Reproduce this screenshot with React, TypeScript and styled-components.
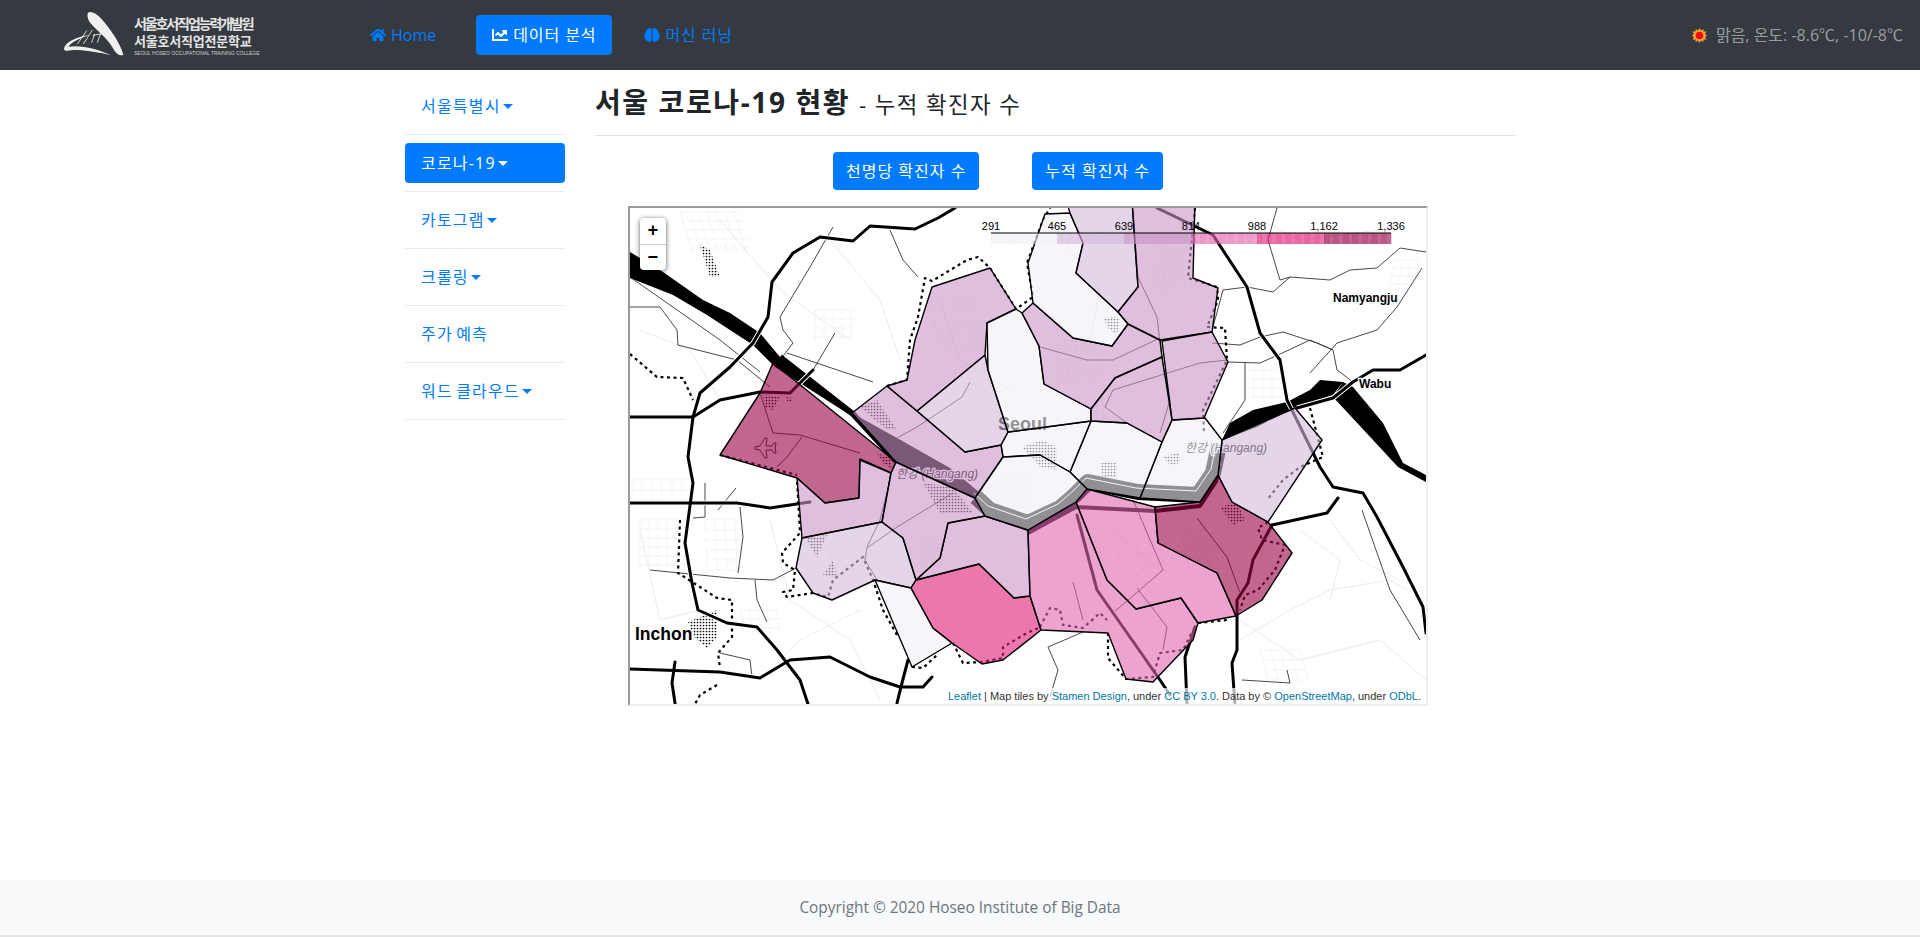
import React from 'react'
import styled, { createGlobalStyle } from 'styled-components'
import { FaBrain, FaChartLine, FaHome } from 'react-icons/fa'

const GlobalStyle = createGlobalStyle`
    html, body { margin: 0; padding: 0; background: #fff; }
    body {
        font-family: "Open Sans", "Noto Sans CJK KR", sans-serif;
        font-size: 16px;
        line-height: 24px;
        color: #212529;
    }
    * { box-sizing: border-box; }
`

const Page = styled.div`
    display: flex;
    flex-direction: column;
    height: 937px;
    overflow: hidden;
`

const Header = styled.header`
    display: flex;
    align-items: center;
    flex: 0 0 70px;
    padding: 0 17px 0 64px;
    background: #343a40;
`

const Logo = styled.div`
    display: flex;
    align-items: center;
    gap: 4px;
    width: 290px;
    color: #e4e4e4;
`

const LogoText = styled.div`
    display: flex;
    flex-direction: column;
    font-family: "Noto Sans CJK KR", sans-serif;
    font-weight: 700;
    white-space: nowrap;
`

const LogoLine = styled.span<{ $size: number; $spacing: number; $height: number }>`
    font-size: ${(p) => p.$size}px;
    letter-spacing: ${(p) => p.$spacing}px;
    line-height: ${(p) => p.$height}px;
`

const LogoSmall = styled.span`
    font-family: "Liberation Sans", sans-serif;
    font-size: 5px;
    line-height: 8px;
    letter-spacing: -0.02px;
    font-weight: 400;
    color: #cfcfcf;
`

const NavList = styled.nav`
    display: flex;
    align-items: center;
    gap: 24px;
`

const NavLink = styled.a<{ $active?: boolean; $korean?: boolean }>`
    display: flex;
    align-items: center;
    gap: 5px;
    height: 40px;
    padding: 0 16px;
    margin-right: ${(p) => (p.$active ? '-8px' : '0')};
    border-radius: 4px;
    white-space: nowrap;
    letter-spacing: ${(p) => (p.$korean ? '0.9px' : '0')};
    color: ${(p) => (p.$active ? '#fff' : '#007bff')};
    background: ${(p) => (p.$active ? '#007bff' : 'transparent')};
`

const Weather = styled.div`
    display: flex;
    align-items: center;
    gap: 9px;
    margin-left: auto;
    color: rgba(255, 255, 255, 0.5);
    white-space: nowrap;
`

const Body = styled.div`
    display: flex;
    flex: 1;
    width: 1140px;
    margin: 0 auto;
`

const Sidebar = styled.ul`
    flex: 0 0 190px;
    list-style: none;
    margin: 8px 0 0;
    padding: 0 15px;
`

const SideItem = styled.li`
    padding: 8px 0;
    border-bottom: 1px solid #e9ecef;
`

const SideLink = styled.a<{ $active?: boolean }>`
    display: block;
    height: 40px;
    padding: 8px 16px;
    border-radius: 4px;
    letter-spacing: 1.2px;
    word-spacing: -2px;
    color: ${(p) => (p.$active ? '#fff' : '#007bff')};
    background: ${(p) => (p.$active ? '#007bff' : 'transparent')};
`

const Caret = styled.span`
    display: inline-block;
    margin-left: 2px;
    vertical-align: 3px;
    border-top: 5px solid;
    border-right: 5px solid transparent;
    border-left: 5px solid transparent;
`

const Main = styled.main`
    flex: 0 0 950px;
    padding: 0 15px;
`

const Title = styled.h3`
    margin: 0;
    height: 66px;
    padding-top: 16px;
    border-bottom: 1px solid #dee2e6;
    font-size: 28px;
    line-height: 33px;
    font-weight: 700;
    letter-spacing: 1.6px;
`

const TitleNote = styled.small`
    font-size: 22.4px;
    font-weight: 400;
    letter-spacing: 1.4px;
`

const ButtonRow = styled.div`
    display: flex;
    gap: 53px;
    margin: 16px 0 16px 238px;
`

const Button = styled.a`
    display: block;
    height: 38px;
    padding: 7px 13px;
    border-radius: 4px;
    color: #fff;
    background: #007bff;
    letter-spacing: 1px;
    white-space: nowrap;
`

const MapFrame = styled.div`
    position: relative;
    width: 800px;
    height: 500px;
    margin-left: 33px;
    border: 2px solid;
    border-color: #9a9a9a #eee #eee #9a9a9a;
    overflow: hidden;
`

const MapSvg = styled.svg`
    display: block;
    width: 796px;
    height: 496px;
`

const ZoomBox = styled.div`
    position: absolute;
    top: 10px;
    left: 10px;
    width: 26px;
    border-radius: 4px;
    background: #fff;
    box-shadow: 0 1px 5px rgba(0, 0, 0, 0.65);
`

const ZoomButton = styled.a`
    display: block;
    height: 26px;
    font: bold 18px/26px "Lucida Console", "Liberation Mono", monospace;
    text-align: center;
    color: #000;
    & + & { border-top: 1px solid #ccc; }
`

const Attribution = styled.div`
    position: absolute;
    right: 0;
    bottom: 0;
    padding: 0 5px;
    background: rgba(255, 255, 255, 0.7);
    font: 11px/16px "Liberation Sans", sans-serif;
    color: #333;
    white-space: nowrap;
`

const AttrLink = styled.a`
    color: #0078a8;
`

const Footer = styled.footer`
    flex: 0 0 57px;
    padding-top: 16px;
    border-bottom: 2px solid #e4e4e6;
    background: #f8f9fa;
    color: #6c757d;
    text-align: center;
    font-size: 15.4px;
`

const FILLS = ['#f1eef6', '#d4b9da', '#c994c7', '#df65b0', '#dd1c77', '#980043']

const DISTRICTS: [number, string][] = [
    [5, '773,363 896,462 891,473 860,459 859,498 825,503 797,478 720,455 760,393'],
    [2, '797,478 825,503 859,498 860,460 891,473 882,522 802,538'],
    [1, '802,538 882,522 903,538 916,580 911,588 875,580 832,600 813,593 796,568'],
    [0, '875,580 911,588 933,628 952,643 912,667'],
    [4, '911,588 916,580 979,564 1014,598 1030,596 1041,630 1003,660 982,664 952,643 933,628'],
    [2, '916,580 940,558 948,523 985,516 1028,530 1030,596 1014,598 979,564'],
    [2, '896,462 975,498 985,516 948,523 940,558 916,580 903,538 882,522 891,473'],
    [3, '1028,530 1076,502 1107,580 1136,609 1181,598 1198,623 1193,640 1153,682 1126,679 1108,633 1041,630 1030,596'],
    [3, '1076,502 1087,489 1155,507 1158,543 1217,573 1236,616 1198,623 1181,598 1136,609 1107,580'],
    [5, '1155,507 1200,502 1218,475 1232,502 1268,522 1292,553 1262,600 1236,616 1217,573 1158,543'],
    [1, '1222,440 1295,408 1322,440 1268,522 1232,502 1218,475'],
    [0, '1172,420 1205,418 1222,440 1218,475 1200,502 1140,498 1162,442'],
    [0, '1091,421 1127,423 1162,442 1140,498 1087,489 1070,472'],
    [0, '1008,432 1091,421 1070,472 1040,455 1003,457 1001,445'],
    [2, '852,413 887,386 917,411 965,452 1001,445 1003,457 975,498 896,462'],
    [0, '1003,457 1040,455 1070,472 1087,489 1076,502 1028,530 985,516 975,498'],
    [1, '917,411 985,355 988,370 1008,432 1001,445 965,452'],
    [2, '887,386 907,380 915,340 932,287 990,268 1016,309 987,323 985,355 917,411'],
    [0, '987,323 1016,309 1022,313 1039,346 1044,384 1091,409 1091,421 1008,432 988,370'],
    [2, '1022,313 1033,303 1073,338 1112,346 1128,324 1160,340 1162,357 1115,378 1091,409 1044,384 1039,346'],
    [0, '1033,303 1028,263 1045,214 1070,213 1083,243 1076,273 1118,312 1128,324 1112,346 1073,338'],
    [1, '1070,213 1066,200 1132,200 1138,287 1118,312 1076,273 1083,243'],
    [2, '1132,200 1195,200 1193,278 1218,288 1212,332 1160,340 1128,324 1118,312 1138,287'],
    [2, '1162,341 1212,332 1228,362 1204,418 1172,420'],
    [2, '1162,357 1172,420 1162,442 1127,423 1091,421 1091,409 1115,378'],
]

const RIVERS = [
    '630,252 663,272 703,300 730,313 760,333 780,357 853,411 853,417 775,367 753,345 707,315 673,295 630,278',
    '852,413 897,438 950,468 985,497 1000,515 980,505 975,498 896,462',
    '1222,440 1230,423 1253,410 1287,402 1310,390 1320,380 1343,382 1333,395 1293,408 1257,427',
    '1343,382 1353,387 1383,423 1403,463 1426,475 1426,482 1398,467 1373,440 1333,397',
]

const HAN_RIVER = '976,497 990,510 1028,523 1060,508 1075,495 1088,482 1138,492 1198,495 1213,473 1219,445'
const HAN_SOUTH = '1028,533 1076,507 1155,511 1200,506 1217,480'
const HAN_WEST = '780,357 853,414 896,461'

const MOTORWAYS = [
    '955,208 938,218 915,229 870,226 853,241 820,237 793,253 772,282 768,317 753,343 730,367 700,393 693,417 688,457 693,483 685,543 692,583 698,610 727,623 757,627 777,650 800,680 808,704',
    '630,417 693,417 720,400 760,392 790,393 813,370',
    '630,503 737,503 770,508 810,502',
    '630,669 720,672 760,678 790,660 830,657 870,677 900,687 923,687 932,677',
    '675,662 672,683 675,703',
    '908,660 902,683 897,703',
    '1157,208 1213,235 1247,287 1260,333 1280,360 1287,400 1320,467 1333,487 1363,493 1377,517 1403,567 1423,607 1426,633',
    '1272,525 1327,513 1338,498',
    '1272,525 1253,560 1248,583 1237,600 1237,650 1232,663 1235,705',
    '1077,515 1097,590 1160,680 1170,695',
    '1195,627 1185,657 1187,705',
    '1297,408 1333,398 1353,382 1373,370 1400,370 1426,355',
]

const ROADS = [
    '1247,287 1273,292 1290,277 1330,280 1350,270 1377,268 1400,248 1426,252',
    '1310,373 1337,343 1377,330 1397,307 1422,268',
    '1213,327 1223,290 1247,287',
    '1228,362 1260,363 1278,355 1310,340 1333,350 1337,370 1353,382',
    '1260,337 1283,332 1317,343 1333,350',
    '1212,343 1240,345 1260,337',
    '1245,363 1245,400 1223,433',
    '1277,208 1268,240 1280,280 1290,277',
    '630,307 660,307 677,330 678,345 737,360 770,387',
    '630,277 720,340 760,372',
    '833,227 810,267 780,317 783,330 793,343 780,360',
    '835,333 813,370',
    '787,353 873,382',
    '890,230 903,260 918,277',
    '650,570 680,573 730,578 773,580 796,568',
    '738,573 743,537 740,507',
    '755,580 757,600 767,622',
    '720,653 750,660 752,677',
    '705,483 705,517 693,518',
    '1048,647 1058,670 1050,697',
    '1048,647 1083,632',
    '1242,680 1290,683 1287,670',
    '970,382 962,397 917,427 897,438',
    '1040,347 1087,360 1113,360 1160,338',
    '1227,360 1200,363 1113,390 1105,407 1127,423',
    '1133,210 1138,277 1157,317 1163,367 1170,400 1160,433',
    '1197,518 1227,557 1240,593',
    '1133,500 1163,570 1113,613',
    '1137,588 1167,627 1163,650',
    '1073,582 1083,620',
    '760,393 773,433 800,435 860,453',
    '802,437 787,457 777,467',
    '890,480 880,520 867,547 865,560 877,580',
    '953,493 897,527 867,548',
    '736,488 718,510',
    '1362,510 1390,590 1420,640',
]

const FAINT = [
    '1240,640 1290,610 1330,590 1390,580 1426,600',
    '1300,530 1340,560 1330,600',
    '1330,520 1360,560 1400,580',
    '640,330 690,350 720,400',
    '830,240 880,300 900,360',
    '720,220 780,290 850,340',
    '640,530 660,620 700,610',
    '770,520 790,600 850,640 880,700',
    '1050,220 1100,290 1090,340',
    '940,300 960,360 1010,390',
    '1260,220 1300,240 1380,230',
    '1240,620 1300,660 1380,640 1426,680',
    '760,680 800,640 860,610',
    '1100,520 1150,560 1120,600',
]

const BOUNDARIES = [
    '887,386 907,380 910,340 918,317 925,278 932,281 967,260 978,257 990,268 1016,309 1033,297 1027,263 1043,220 1050,208',
    '1195,208 1188,278 1217,287 1218,300 1207,327 1225,328 1227,360 1203,410 1204,433',
    '1310,408 1323,457 1300,467 1283,480 1267,500',
    '1268,522 1258,528 1262,540 1285,545 1275,570 1258,590 1245,595 1240,610',
    '1040,627 1050,608 1060,610 1063,625 1083,628 1100,613 1107,620',
    '1198,623 1227,620',
    '1108,633 1108,658 1126,679 1153,677 1160,653 1183,650 1193,630',
    '953,643 963,663 982,662 1003,658 1003,647 1027,633 1041,627',
    '912,667 923,668 937,655',
    '897,635 883,610 873,580 863,557 833,580 828,597 813,593 787,597 783,592 793,590 795,570 783,563 782,553 800,533 797,480',
    '720,455 797,475',
    '630,354 657,377 683,378 693,400',
    '680,520 678,573 700,587 717,598 732,600 732,637 718,653 720,668',
    '717,685 700,695 695,704',
]

const STIPPLES = [
    '700,245 710,250 720,277 710,277',
    '763,393 780,397 773,410 765,408',
    '785,397 793,398 789,404',
    '860,407 877,400 897,430 887,430',
    '877,453 890,457 893,470 883,463',
    '1022,447 1042,440 1057,447 1057,470 1040,467',
    '1103,317 1120,317 1117,335 1108,328',
    '1100,463 1117,463 1117,477 1103,477',
    '1163,457 1180,452 1180,463 1170,465',
    '1220,507 1237,503 1245,520 1233,525',
    '923,483 953,487 973,513 940,513',
    '805,538 827,535 817,557',
    '823,575 833,560 837,578',
    '688,622 717,610 717,637 707,648 695,638',
]

// faint street blocks: x, y, width, height, spacing, shear
const STREETS: [number, number, number, number, number, number][] = [
    [680, 212, 60, 40, 9, 12],
    [632, 480, 60, 20, 10, 0],
    [640, 520, 45, 50, 9, 0],
    [705, 520, 35, 50, 10, 2],
    [815, 310, 40, 30, 9, 0],
    [1150, 250, 30, 40, 10, 6],
    [1245, 370, 35, 30, 9, 0],
    [1395, 260, 25, 30, 8, -6],
    [1055, 340, 40, 40, 10, 4],
    [930, 300, 50, 50, 11, 10],
    [920, 540, 25, 30, 9, 3],
    [1110, 520, 45, 50, 11, 12],
    [1000, 480, 30, 30, 9, 0],
    [1260, 650, 40, 30, 10, 8],
    [740, 610, 40, 25, 9, 4],
    [1180, 530, 30, 40, 10, 10],
    [830, 545, 40, 30, 10, 3],
    [1085, 400, 20, 20, 6, 0],
]

const streetPath = ([x, y, w, h, s, d]: (typeof STREETS)[number]) => {
    let out = ''
    for (let i = 0; i <= w; i += s) out += `M${x + i} ${y}L${x + i + d} ${y + h}`
    for (let j = 0; j <= h; j += s) {
        const sx = x + (d * j) / h
        out += `M${sx} ${y + j}L${sx + w} ${y + j}`
    }
    return out
}

const TICKS: [number, string][] = [
    [991, '291'],
    [1057, '465'],
    [1124, '639'],
    [1191, '814'],
    [1257, '988'],
    [1324, '1,162'],
    [1391, '1,336'],
]

const Legend = () => (
    <g>
        {TICKS.slice(0, -1).map(([x], i) =>
            Array.from({ length: 14 }, (_, k) => (
                <rect
                    key={`${i}-${k}`}
                    x={x + (k * (TICKS[i + 1][0] - x)) / 14}
                    y={233}
                    width={(TICKS[i + 1][0] - x) / 14 + 0.3}
                    height={11}
                    fill={FILLS[i]}
                    opacity={k % 2 ? 0.6 : 0.66}
                />
            )),
        )}
        <line x1={991} x2={1391} y1={233} y2={233} stroke="#000" />
        {TICKS.map(([x, label]) => (
            <text key={label} x={x} y={230} textAnchor="middle" fontSize={11} fontFamily="Liberation Sans, sans-serif" fill="#000">
                {label}
            </text>
        ))}
    </g>
)

const MapLabel = ({ x, y, size, children }: { x: number; y: number; size: number; children: string }) => (
    <text
        x={x}
        y={y}
        fontSize={size}
        fontWeight="700"
        fontFamily="Liberation Sans, sans-serif"
        fill="#000"
        stroke="#fff"
        strokeWidth="2.5"
        paintOrder="stroke"
    >
        {children}
    </text>
)

const RiverLabel = ({ x, y }: { x: number; y: number }) => (
    <text
        x={x}
        y={y}
        fontSize={12}
        fontFamily="Liberation Sans, Noto Sans CJK KR, sans-serif"
        fontStyle="italic"
        fill="#000"
        stroke="#fff"
        strokeWidth="2.5"
        paintOrder="stroke"
    >
        한강 (Hangang)
    </text>
)

const SeoulMap = () => (
    <MapSvg viewBox="630 208 796 496">
        <defs>
            <pattern id="dots" width="3" height="3" patternUnits="userSpaceOnUse">
                <circle cx="1.5" cy="1.5" r="0.85" fill="#000" />
            </pattern>
        </defs>
        <rect x="630" y="208" width="796" height="496" fill="#fff" />
        <path d={STREETS.map(streetPath).join('')} fill="none" stroke="#ececec" strokeWidth="0.6" />
        {FAINT.map((pts) => (
            <polyline key={pts} points={pts} fill="none" stroke="#e4e4e4" strokeWidth="0.8" />
        ))}
        {ROADS.map((pts) => (
            <polyline key={pts} points={pts} fill="none" stroke="#333" strokeWidth="0.9" />
        ))}
        {RIVERS.map((pts) => (
            <polygon key={pts} points={pts} fill="#000" />
        ))}
        <polyline points={HAN_WEST} fill="none" stroke="#000" strokeWidth="6" strokeLinejoin="round" />
        <polyline points={HAN_RIVER} fill="none" stroke="#000" strokeWidth="16" strokeLinejoin="round" />
        <polyline points={HAN_RIVER} fill="none" stroke="#fff" strokeWidth="1" strokeLinejoin="round" transform="translate(-2 -4)" />
        <polyline points={HAN_SOUTH} fill="none" stroke="#000" strokeWidth="4" strokeLinejoin="round" />
        {STIPPLES.map((pts) => (
            <polygon key={pts} points={pts} fill="url(#dots)" />
        ))}
        {MOTORWAYS.map((pts) => (
            <polyline key={pts} points={pts} fill="none" stroke="#fff" strokeWidth="5" strokeLinejoin="round" />
        ))}
        {MOTORWAYS.map((pts) => (
            <polyline key={pts} points={pts} fill="none" stroke="#000" strokeWidth="3" strokeLinejoin="round" strokeLinecap="round" />
        ))}
        {BOUNDARIES.map((pts) => (
            <polyline key={pts} points={pts} fill="none" stroke="#000" strokeWidth="2.2" strokeDasharray="3 3.5" strokeLinejoin="round" />
        ))}
        <path
            d="M755 447l5-1 5-8h2l-1 8 6 0 2-3h2l-1 5 1 5h-2l-2-3-6 0 1 8h-2l-5-8-5-1z"
            fill="none"
            stroke="#000"
            strokeWidth="0.8"
        />
        <MapLabel x={998} y={430} size={18}>Seoul</MapLabel>
        <MapLabel x={635} y={640} size={17.5}>Inchon</MapLabel>
        <MapLabel x={1333} y={302} size={12}>Namyangju</MapLabel>
        <MapLabel x={1359} y={388} size={12}>Wabu</MapLabel>
        <RiverLabel x={896} y={478} />
        <RiverLabel x={1185} y={452} />
        {DISTRICTS.map(([tone, pts]) => (
            <polygon key={pts} points={pts} fill={FILLS[tone]} fillOpacity={0.6} stroke="#000" strokeWidth="1.4" strokeLinejoin="round" />
        ))}
        <Legend />
    </MapSvg>
)

const LogoMark = () => (
    <svg width="66" height="50" viewBox="50 30 198 150" fill="#f0f0f0">
        <path d="M122 38C128 32 146 38 160 54C190 88 218 128 228 164C218 170 208 162 200 150C182 115 150 95 130 70C122 60 118 46 122 38Z" />
        <path d="M50 146C52 128 85 110 128 104C95 116 68 128 64 140C100 134 150 146 192 166C150 156 90 146 60 152C54 153 50 150 50 146Z" />
        <path d="M90 132L118 92M108 132L135 90M133 128L142 102M150 128L166 84M136 106L186 98" fill="none" stroke="#f0f0f0" strokeWidth="2.5" />
    </svg>
)

const SunIcon = () => (
    <svg width="15" height="15" viewBox="0 0 15 15">
        <path
            d="M7.5 0l1.5 2.6L11.3 1l.3 2.6 2.9-.2-1.4 2.4 2 1.7-2 1.7 1.4 2.4-2.9-.2-.3 2.6-2.3-1.6-1.5 2.6L6 12.4l-2.3 1.6-.3-2.6-2.9.2 1.4-2.4-2-1.7 2-1.7L.5 3.4l2.9.2L3.7 1 6 2.6z"
            fill="#f0a13c"
        />
        <circle cx="7.5" cy="7.5" r="3.8" fill="#f40d0d" />
    </svg>
)

const SIDE_ITEMS = [
    { label: '서울특별시', caret: true },
    { label: '코로나-19', caret: true, active: true },
    { label: '카토그램', caret: true },
    { label: '크롤링', caret: true },
    { label: '주가 예측', caret: false },
    { label: '워드 클라우드', caret: true },
]

export default function App() {
    return (
        <Page>
            <GlobalStyle />
            <Header>
                <Logo>
                    <LogoMark />
                    <LogoText>
                        <LogoLine $size={14} $spacing={-2.1} $height={19}>서울호서직업능력개발원</LogoLine>
                        <LogoLine $size={13} $spacing={-0.2} $height={16}>서울호서직업전문학교</LogoLine>
                        <LogoSmall>SEOUL HOSEO OCCUPATIONAL TRAINING COLLEGE</LogoSmall>
                    </LogoText>
                </Logo>
                <NavList>
                    <NavLink><FaHome />Home</NavLink>
                    <NavLink $active $korean><FaChartLine />데이터 분석</NavLink>
                    <NavLink $korean><FaBrain />머신 러닝</NavLink>
                </NavList>
                <Weather>
                    <SunIcon />
                    맑음, 온도: -8.6℃, -10/-8℃
                </Weather>
            </Header>
            <Body>
                <Sidebar>
                    {SIDE_ITEMS.map((item) => (
                        <SideItem key={item.label}>
                            <SideLink $active={item.active}>
                                {item.label}
                                {item.caret && <Caret />}
                            </SideLink>
                        </SideItem>
                    ))}
                </Sidebar>
                <Main>
                    <Title>
                        서울 코로나-19 현황 <TitleNote>- 누적 확진자 수</TitleNote>
                    </Title>
                    <ButtonRow>
                        <Button>천명당 확진자 수</Button>
                        <Button>누적 확진자 수</Button>
                    </ButtonRow>
                    <MapFrame>
                        <SeoulMap />
                        <ZoomBox>
                            <ZoomButton>+</ZoomButton>
                            <ZoomButton>−</ZoomButton>
                        </ZoomBox>
                        <Attribution>
                            <AttrLink>Leaflet</AttrLink> | Map tiles by <AttrLink>Stamen Design</AttrLink>, under{' '}
                            <AttrLink>CC BY 3.0</AttrLink>. Data by © <AttrLink>OpenStreetMap</AttrLink>, under{' '}
                            <AttrLink>ODbL</AttrLink>.
                        </Attribution>
                    </MapFrame>
                </Main>
            </Body>
            <Footer>Copyright © 2020 Hoseo Institute of Big Data</Footer>
        </Page>
    )
}
